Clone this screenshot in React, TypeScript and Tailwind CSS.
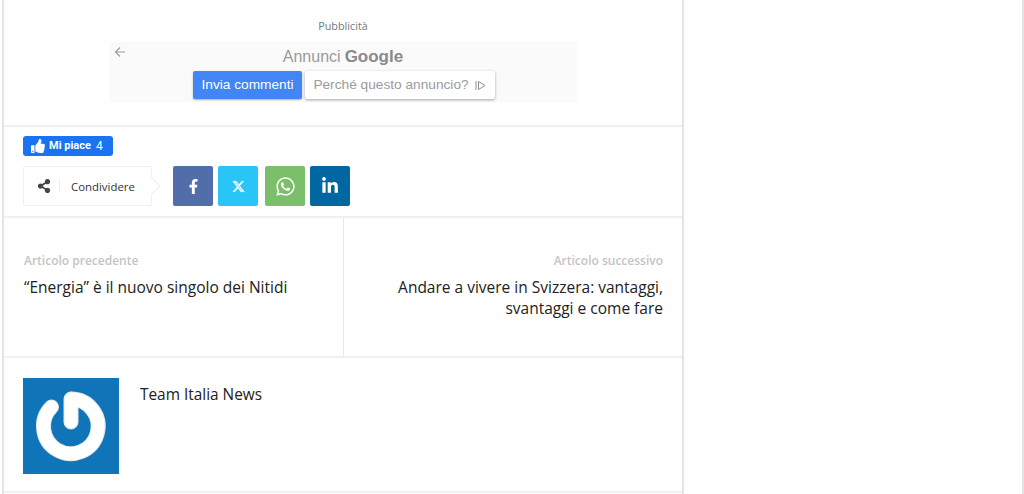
import React from "react";
import { FaFacebookF, FaWhatsapp, FaLinkedinIn, FaThumbsUp, FaShareAlt } from "react-icons/fa";
import { FaXTwitter } from "react-icons/fa6";

const shareButtons = [
  { name: "facebook", bg: "bg-[#516eab]", gap: "ml-0", icon: <FaFacebookF size={15} /> },
  { name: "twitter", bg: "bg-[#29c5f6]", gap: "ml-[5px]", icon: <FaXTwitter size={13} stroke="currentColor" strokeWidth={15} /> },
  { name: "whatsapp", bg: "bg-[#7bbf6a]", gap: "ml-[7px]", icon: <FaWhatsapp size={21} /> },
  { name: "linkedin", bg: "bg-[#0266a0]", gap: "ml-[5px]", icon: <FaLinkedinIn size={18} /> },
];

const AdBlock = () => (
  <div className="h-[127px] border-b-2 border-[#f0f0f0] flex flex-col items-center pt-[19px]">
    <div className="text-[10.8px] leading-[14px] text-[#777] font-['Open_Sans',sans-serif]">Pubblicità</div>
    <div className="relative mt-[9px] w-[468px] h-[60px] bg-[#fafafa] font-['Liberation_Sans',sans-serif] flex flex-col items-center">
      <svg className="absolute left-[5px] top-[4px]" width="12" height="12" viewBox="0 0 12 12" fill="none" stroke="#9a9a9a" strokeWidth="1.1">
        <path d="M11 6H1.5M6 1.5 1.5 6 6 10.500" />
      </svg>
      <div className="h-[29px] flex items-center text-[16px] text-[#9b9b9b] gap-[4px]">
        <span>Annunci</span>
        <span className="text-[17px] font-bold text-[#8a8a8a]">Google</span>
      </div>
      <div className="flex gap-[3px] ml-[2px]">
        <div className="w-[109px] h-[28px] rounded-[2px] bg-[#4285f4] text-white text-[13.7px] flex items-center justify-center shadow-[0_1px_2px_rgba(0,0,0,0.3)]">
          Invia commenti
        </div>
        <div className="w-[190px] h-[28px] rounded-[2px] bg-white text-[#9b9b9b] text-[13.7px] flex items-center justify-center gap-[6px] pr-[1px] shadow-[0_1px_3px_rgba(0,0,0,0.35)]">
          <span>Perché questo annuncio?</span>
          <svg width="11" height="11" viewBox="0 0 11 11" fill="none" stroke="#8f8f8f" strokeWidth="1">
            <path d="M1 1v9M3.500 1.500 10 5.500 3.500 9.500Z" />
          </svg>
        </div>
      </div>
    </div>
  </div>
);

const ShareBlock = () => (
  <div className="h-[91px] border-b-2 border-[#f0f0f0] pl-[19px] pt-[9px]">
    <div className="w-[90px] h-[20px] rounded-[3px] bg-[#1a73f0] text-white flex items-center pl-[8px] text-[11px] font-bold font-['Roboto',sans-serif]">
      <FaThumbsUp size={14} />
      <span className="ml-[4px]">Mi piace</span>
      <span className="ml-[5px] font-normal text-[12px]">4</span>
    </div>
    <div className="flex mt-[10px]">
      <div className="relative w-[129px] h-[40px] bg-white border border-[#f0f0f0] rounded-[2px] flex items-center font-['Open_Sans',sans-serif]">
        <div className="w-[35px] flex justify-end pr-[8px] text-[#444]">
          <FaShareAlt size={14} />
        </div>
        <div className="w-px h-[14px] bg-[#eeeeee]" />
        <div className="ml-[11px] pt-[1px] text-[11.4px] text-[#333] font-medium">Condividere</div>
        <div className="absolute right-[-7px] top-[13px] w-[12px] h-[12px] rotate-45 bg-white border-t border-r border-[#f0f0f0]" />
      </div>
      <div className="flex ml-[21px]">
        {shareButtons.map((btn) => (
          <div key={btn.name} className={`w-[40px] h-[40px] rounded-[2px] ${btn.gap} ${btn.bg} text-white flex items-center justify-center`}>
            {btn.icon}
          </div>
        ))}
      </div>
    </div>
  </div>
);

const NavBlock = () => (
  <div className="h-[140px] border-b-2 border-[#f0f0f0] flex font-['Open_Sans',sans-serif]">
    <div className="w-[340px] border-r border-[#e8e8e8] pl-[20px] pt-[34px]">
      <div className="text-[12px] leading-[17px] font-semibold text-[#c4c4c4]">Articolo precedente</div>
      <div className="mt-[8px] text-[15.5px] leading-[21px] font-medium text-[#222]">“Energia” è il nuovo singolo dei Nitidi</div>
    </div>
    <div className="flex-1 pr-[19px] pt-[34px] text-right">
      <div className="text-[12px] leading-[17px] font-semibold text-[#c4c4c4]">Articolo successivo</div>
      <div className="mt-[8px] text-[15.5px] leading-[21px] font-medium text-[#222]">
        Andare a vivere in Svizzera: vantaggi,
        <br />
        svantaggi e come fare
      </div>
    </div>
  </div>
);

const AuthorBlock = () => (
  <div className="h-[135px] border-b-2 border-[#f0f0f0] flex pl-[19px] pt-[20px] font-['Open_Sans',sans-serif]">
    <div className="w-[96px] h-[96px] bg-[#0f74b8] flex items-center justify-center">
      <svg width="96" height="96" viewBox="0 0 96 96" fill="none" strokeLinecap="round">
        <path d="M28.500 29A27.300 27.300 0 1 0 48.300 21M48 21V44" stroke="#dfe5ea" strokeWidth="15" />
        <path d="M28.500 29A27.300 27.300 0 1 0 48.300 21M48 21V44" stroke="white" strokeWidth="13" />
      </svg>
    </div>
    <div className="ml-[21px] mt-[5px] text-[15.400px] leading-[24px] font-medium text-[#222]">Team Italia News</div>
  </div>
);

const App = () => {
  return (
    <div className="w-[1024px] h-[494px] bg-white overflow-hidden flex">
      <div className="ml-[2px] w-[682px] h-[494px] border-x-2 border-[#e4e4e4] shrink-0">
        <AdBlock />
        <ShareBlock />
        <NavBlock />
        <AuthorBlock />
      </div>
      <div className="ml-auto w-[2px] h-[494px] bg-[#e4e4e4]" />
    </div>
  );
};

export default App;
